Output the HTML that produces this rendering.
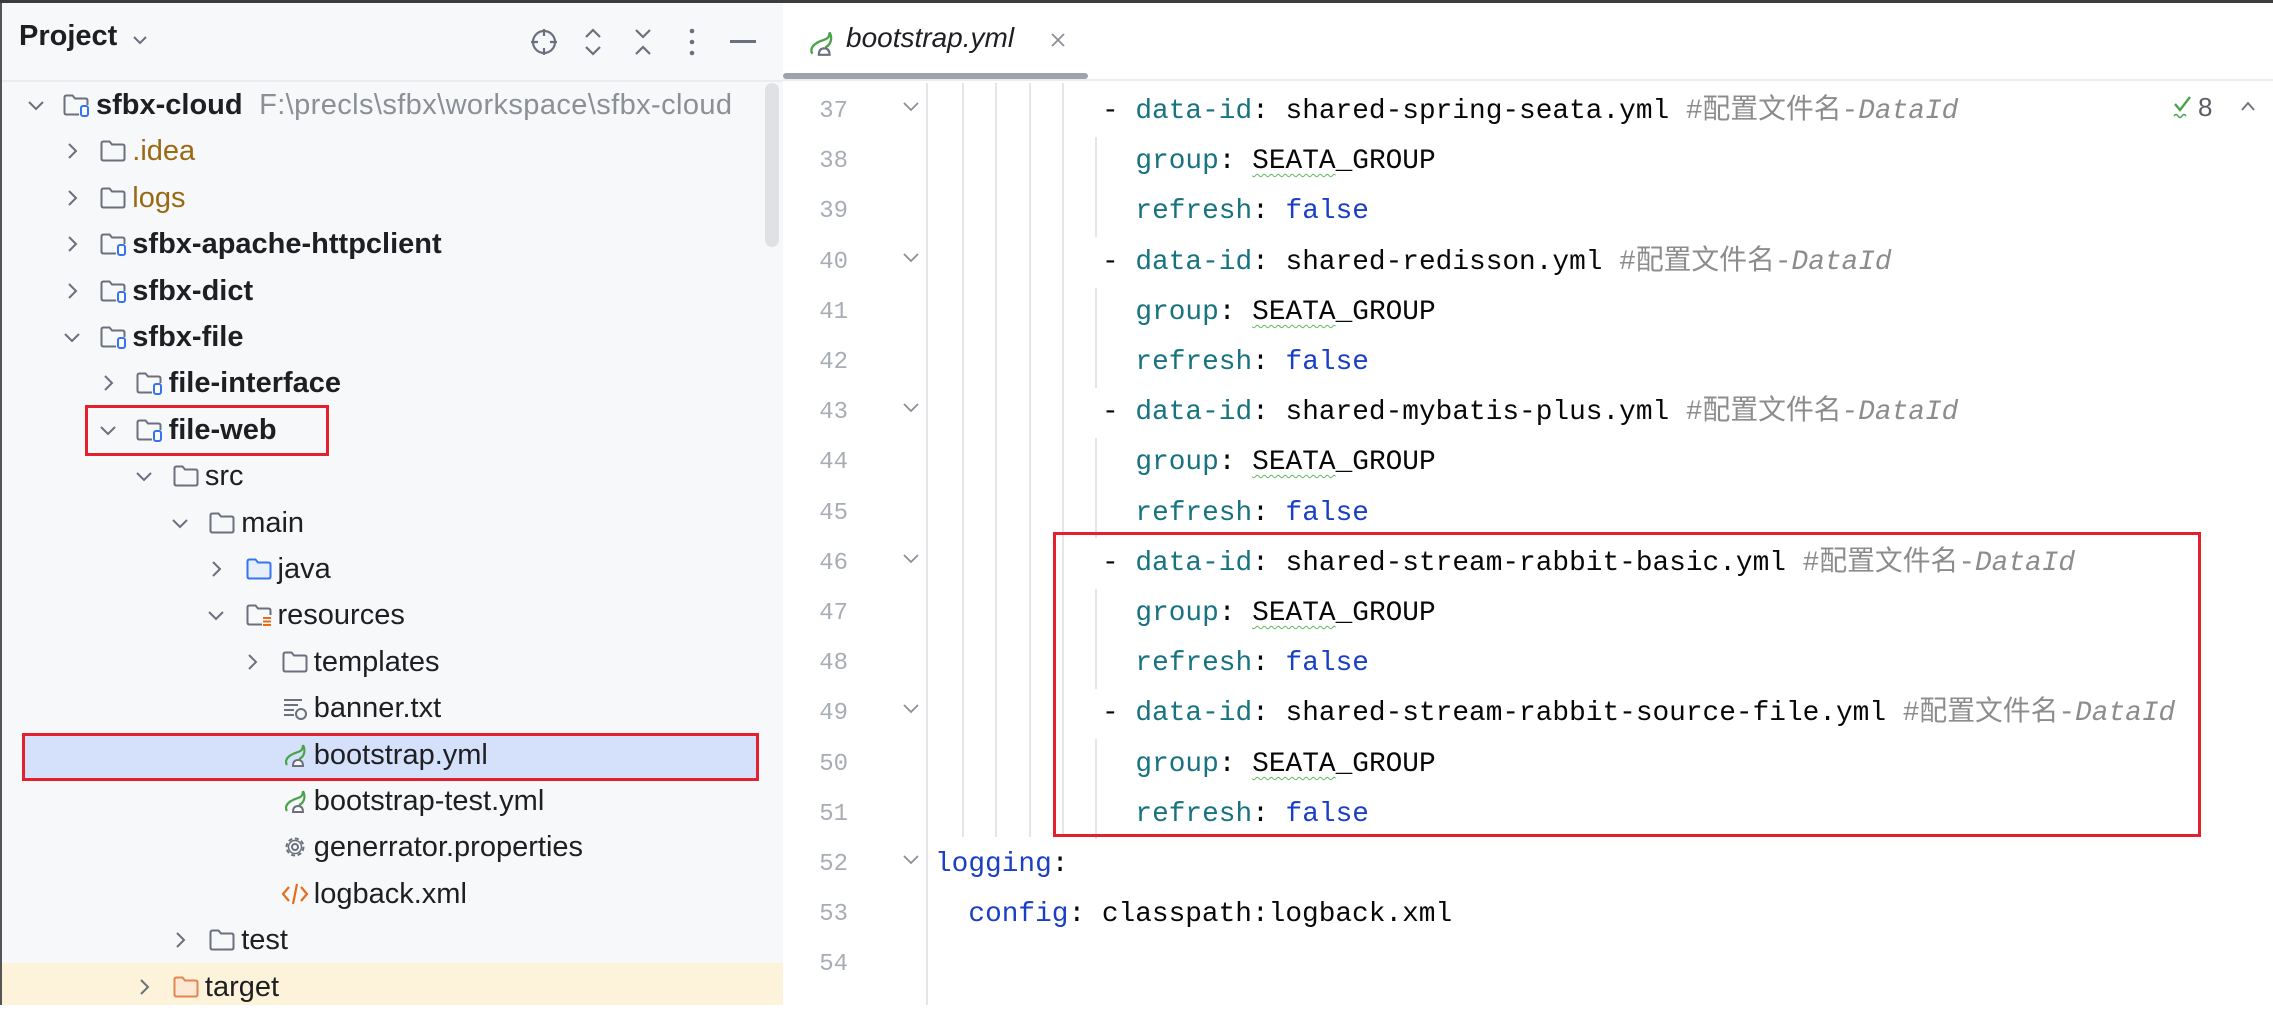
<!DOCTYPE html>
<html><head><meta charset="utf-8">
<style>
*{margin:0;padding:0;box-sizing:border-box}
body{width:2273px;height:1005px;overflow:hidden;background:#fff;position:relative;font-family:"Liberation Sans","Noto Sans CJK SC",sans-serif}
.a{position:absolute}
#left{left:0;top:0;width:783px;height:1005px;background:#f7f8fa;border-left:2px solid #555}
.row{position:absolute;height:46px;line-height:46px;font-size:29px;color:#1e1f22;white-space:nowrap}
.row .t{position:absolute;top:0}
.chev{position:absolute;top:13px;width:20px;height:20px}
.ic{position:absolute;top:11px;width:28px;height:24px}
.code{position:absolute;font-family:"Liberation Mono","Noto Sans CJK SC",monospace;font-size:27.8px;white-space:pre;height:50px;line-height:50px;color:#080808}
.k{color:#17737f}.b{color:#1a3fc4}.c{color:#8c8c8c}.c i{font-style:italic}
.cj{letter-spacing:0px}
.sq{text-decoration:underline wavy #5fb85f;text-decoration-thickness:1px;text-underline-offset:5px}
.ln{position:absolute;left:800px;width:48px;text-align:right;font-family:"Liberation Mono",monospace;font-size:24px;color:#a8adb5;height:50px;line-height:50px}
.fold{position:absolute;left:902px;width:18px;height:12px}
.g{position:absolute;width:1.5px;background:#e4e5e8}
</style></head><body>
<div class="a" style="left:0;top:0;width:2273px;height:3px;background:#3c3c3c;z-index:5"></div>
<div id="left" class="a">
  <div class="a" style="left:17px;top:20px;font-size:29px;color:#1e1f22;font-weight:600">Project</div>
  <svg class="a" style="left:130px;top:34px" width="16" height="12"><path d="M2 3 L8 9 L14 3" fill="none" stroke="#6c707e" stroke-width="2"/></svg>
  <svg class="a" style="left:526px;top:26px" width="32" height="32"><circle cx="16" cy="16" r="11" fill="none" stroke="#6c707e" stroke-width="2.2"/><path d="M16 3v7M16 22v7M3 16h7M22 16h7" stroke="#6c707e" stroke-width="2.2"/></svg>
  <svg class="a" style="left:580px;top:26px" width="22" height="32"><path d="M4 11 L11 4 L18 11 M4 21 L11 28 L18 21" fill="none" stroke="#6c707e" stroke-width="2.2"/></svg>
  <svg class="a" style="left:630px;top:26px" width="22" height="32"><path d="M4 4 L11 11 L18 4 M4 28 L11 21 L18 28" fill="none" stroke="#6c707e" stroke-width="2.2"/></svg>
  <svg class="a" style="left:684px;top:26px" width="12" height="32"><circle cx="6" cy="5" r="2.3" fill="#6c707e"/><circle cx="6" cy="16" r="2.3" fill="#6c707e"/><circle cx="6" cy="27" r="2.3" fill="#6c707e"/></svg>
  <div class="a" style="left:728px;top:40px;width:26px;height:2.5px;background:#6c707e"></div>
  <div class="a" style="left:0;top:80px;width:781px;height:2px;background:#ebecf0"></div>
  <div class="a" style="left:763px;top:83px;width:14px;height:164px;background:#dfe1e5;border-radius:7px"></div>
  <div class="a" style="left:0;top:963px;width:781px;height:42px;background:#fdf2da"></div>
  <div class="a" style="left:20px;top:733px;width:737px;height:48px;background:#d5e1fb"></div>
  <div class="a" style="left:83px;top:405px;width:244px;height:51px;border:3px solid #e5202e"></div>
  <div class="a" style="left:20px;top:733px;width:737px;height:48px;border:3px solid #e5202e"></div>
</div>
<svg width="0" height="0" style="position:absolute">
<defs>
<symbol id="fold" viewBox="0 0 28 24"><path d="M2.5 4.5 Q2.5 2.5 4.5 2.5 H10.5 L13 5.5 H23.5 Q25.5 5.5 25.5 7.5 V19.5 Q25.5 21.5 23.5 21.5 H4.5 Q2.5 21.5 2.5 19.5 Z" fill="#f7f8fa" stroke="#6c707e" stroke-width="2"/></symbol>
<symbol id="mod" viewBox="0 0 28 24"><path d="M17 21.5 H4.5 Q2.5 21.5 2.5 19.5 V4.5 Q2.5 2.5 4.5 2.5 H10.5 L13 5.5 H23.5 Q25.5 5.5 25.5 7.5 V12" fill="none" stroke="#6c707e" stroke-width="2"/><rect x="19" y="13" width="7" height="10" rx="2" fill="#fff" stroke="#3574f0" stroke-width="2"/></symbol>
<symbol id="blue" viewBox="0 0 28 24"><path d="M2.5 4.5 Q2.5 2.5 4.5 2.5 H10.5 L13 5.5 H23.5 Q25.5 5.5 25.5 7.5 V19.5 Q25.5 21.5 23.5 21.5 H4.5 Q2.5 21.5 2.5 19.5 Z" fill="#e7effd" stroke="#3574f0" stroke-width="2"/></symbol>
<symbol id="orange" viewBox="0 0 28 24"><path d="M2.5 4.5 Q2.5 2.5 4.5 2.5 H10.5 L13 5.5 H23.5 Q25.5 5.5 25.5 7.5 V19.5 Q25.5 21.5 23.5 21.5 H4.5 Q2.5 21.5 2.5 19.5 Z" fill="#fde8d4" stroke="#e08855" stroke-width="2"/></symbol>
<symbol id="res" viewBox="0 0 28 24"><path d="M17 21.5 H4.5 Q2.5 21.5 2.5 19.5 V4.5 Q2.5 2.5 4.5 2.5 H10.5 L13 5.5 H23.5 Q25.5 5.5 25.5 7.5 V12" fill="none" stroke="#6c707e" stroke-width="2"/><path d="M18 15h8M18 18.5h8M18 22h8" stroke="#e66d17" stroke-width="2"/></symbol>
<symbol id="spring" viewBox="0 0 28 24"><path d="M22 2 C22 10 16 8 10 12 C5 15 4 19 6 22" fill="none" stroke="#4aa34a" stroke-width="2.2"/><path d="M22 2 C25 8 23 14 18 16" fill="none" stroke="#4aa34a" stroke-width="2.2"/><path d="M12 23 Q12 17 17 17 Q22 17 22 23 Z" fill="#fff" stroke="#6c707e" stroke-width="2"/></symbol>
<symbol id="txt" viewBox="0 0 28 24"><path d="M3 4h18M3 9h14M3 14h10M3 19h10" stroke="#6c707e" stroke-width="2"/><circle cx="20" cy="18" r="5" fill="#f7f8fa" stroke="#6c707e" stroke-width="2"/></symbol>
<symbol id="gear" viewBox="0 0 28 24"><circle cx="14" cy="12" r="8.5" fill="none" stroke="#6c707e" stroke-width="2" stroke-dasharray="4 2.6"/><circle cx="14" cy="12" r="6.5" fill="none" stroke="#6c707e" stroke-width="1.5"/><circle cx="14" cy="12" r="3" fill="none" stroke="#6c707e" stroke-width="2"/></symbol>
<symbol id="xml" viewBox="0 0 28 24"><path d="M8 5 L2 12 L8 19 M20 5 L26 12 L20 19 M16 2 L12 22" fill="none" stroke="#e66d17" stroke-width="2.2"/></symbol>
<symbol id="cr" viewBox="0 0 20 20"><path d="M7 3 L14 10 L7 17" fill="none" stroke="#6c707e" stroke-width="2"/></symbol>
<symbol id="cd" viewBox="0 0 20 20"><path d="M3 7 L10 14 L17 7" fill="none" stroke="#6c707e" stroke-width="2"/></symbol>
</defs></svg>

<div id="tree"></div>
<script>
const rows=[
[0,'cd','mod','sfbx-cloud','#1e1f22',' F:\\precls\\sfbx\\workspace\\sfbx-cloud'],
[1,'cr','fold','.idea','#9a6a13'],
[1,'cr','fold','logs','#9a6a13'],
[1,'cr','mod','sfbx-apache-httpclient'],
[1,'cr','mod','sfbx-dict'],
[1,'cd','mod','sfbx-file'],
[2,'cr','mod','file-interface'],
[2,'cd','mod','file-web'],
[3,'cd','fold','src'],
[4,'cd','fold','main'],
[5,'cr','blue','java'],
[5,'cd','res','resources'],
[6,'cr','fold','templates'],
[6,'','txt','banner.txt'],
[6,'','spring','bootstrap.yml'],
[6,'','spring','bootstrap-test.yml'],
[6,'','gear','generrator.properties'],
[6,'','xml','logback.xml'],
[4,'cr','fold','test'],
[3,'cr','orange','target','#1e1f22']
];
let h='';
rows.forEach((r,i)=>{
 const y=Math.round(82+46.4*i);const lv=r[0];
 const bold=(['sfbx-cloud','sfbx-apache-httpclient','sfbx-dict','sfbx-file','file-interface','file-web'].includes(r[3]));
 h+=`<div class="row" style="left:0;top:${y}px;width:780px">`;
 if(r[1])h+=`<svg class="chev" style="left:${26+36*lv}px"><use href="#${r[1]}"/></svg>`;
 h+=`<svg class="ic" style="left:${62+36.5*lv}px"><use href="#${r[2]}"/></svg>`;
 h+=`<span class="t" style="left:${96+36.3*lv}px;color:${r[4]||'#1e1f22'};font-weight:${bold?700:400}">${r[3]}${r[5]?`<span style="color:#8c8f96;font-weight:400;margin-left:8px;letter-spacing:0.4px">${r[5]}</span>`:''}</span></div>`;
});
document.getElementById('tree').innerHTML=h;
</script>

<div class="a" style="left:783px;top:0;width:1490px;height:81px;background:#fff;border-bottom:2px solid #ebecf0"></div>
<svg class="a" style="left:806px;top:30px" width="30" height="26"><use href="#spring"/></svg>
<div class="a" style="left:846px;top:22px;font-size:28px;font-style:italic;color:#1e1f22">bootstrap.yml</div>
<svg class="a" style="left:1050px;top:32px" width="16" height="16"><path d="M2 2L14 14M14 2L2 14" stroke="#8c8f96" stroke-width="1.8"/></svg>
<div class="a" style="left:783px;top:73px;width:305px;height:6px;background:#9ea2ad;border-radius:3px"></div>

<div class="g" style="left:926px;top:83px;height:922px"></div>
<div class="g" style="left:962px;top:83px;height:754px"></div>
<div class="g" style="left:995px;top:83px;height:754px"></div>
<div class="g" style="left:1029px;top:83px;height:754px"></div>
<div class="g" style="left:1062px;top:83px;height:754px"></div>
<div class="g" style="left:1095px;top:137px;height:100px"></div>
<div class="g" style="left:1095px;top:288px;height:100px"></div>
<div class="g" style="left:1095px;top:438px;height:100px"></div>
<div class="g" style="left:1095px;top:589px;height:100px"></div>
<div class="g" style="left:1095px;top:739px;height:100px"></div>

<div id="ed"></div>
<script>
const C='<span class="c">#<span class="cj">配置文件名</span>-<i>DataId</i></span>';
const G='<span class="k">group</span>: <span class="sq">SEATA</span>_GROUP';
const R='<span class="k">refresh</span>: <span class="b">false</span>';
const D=n=>`- <span class="k">data-id</span>: ${n} ${C}`;
const L=[
[10,D('shared-spring-seata.yml'),1],[12,G],[12,R],
[10,D('shared-redisson.yml'),1],[12,G],[12,R],
[10,D('shared-mybatis-plus.yml'),1],[12,G],[12,R],
[10,D('shared-stream-rabbit-basic.yml'),1],[12,G],[12,R],
[10,D('shared-stream-rabbit-source-file.yml'),1],[12,G],[12,R],
[0,'<span class="b">logging</span>:',1],[2,'<span class="b">config</span>: classpath:logback.xml'],[0,'']
];
let e='';
L.forEach((l,i)=>{
 const top=Math.round(87+50.2*i);
 e+=`<div class="ln" style="top:${top}px">${37+i}</div>`;
 if(l[2])e+=`<svg class="fold" style="top:${top+14}px" viewBox="0 0 18 12"><path d="M2 2L9 9L16 2" fill="none" stroke="#8c8f96" stroke-width="1.8"/></svg>`;
 e+=`<div class="code" style="left:${935+16.7*l[0]}px;top:${top}px">${l[1]}</div>`;
});
document.getElementById('ed').innerHTML=e;
</script>

<div class="a" style="left:1053px;top:532px;width:1148px;height:305px;border:3px solid #e5202e"></div>

<svg class="a" style="left:2172px;top:94px" width="22" height="26"><path d="M3 10L8 16L18 3" fill="none" stroke="#4aa34a" stroke-width="2.4"/><path d="M2 22 q2 -3 4 0 t4 0 t4 0" fill="none" stroke="#4aa34a" stroke-width="1.5"/></svg>
<div class="a" style="left:2198px;top:92px;font-size:26px;color:#5a5d63">8</div>
<svg class="a" style="left:2240px;top:100px" width="16" height="12"><path d="M2 10L8 3L14 10" fill="none" stroke="#6c707e" stroke-width="1.8"/></svg>
</body></html>
